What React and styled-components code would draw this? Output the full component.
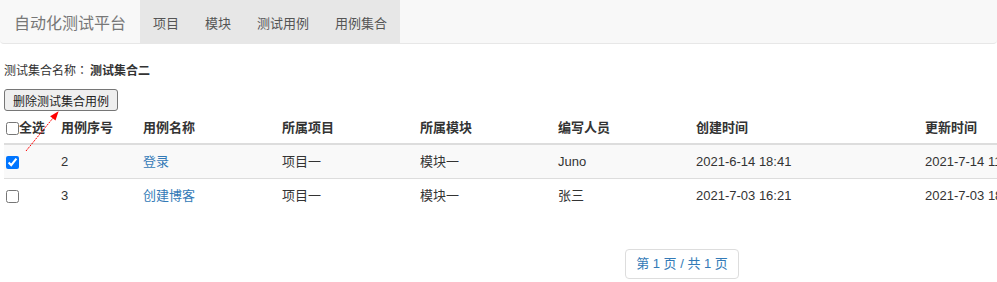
import React from "react";
import styled, { createGlobalStyle } from "styled-components";

const GlobalStyle = createGlobalStyle`
html, body {
  margin: 0;
  padding: 0;
  overflow: hidden;
  background: #fff;
}
body {
  font-family: "Liberation Sans", "Noto Sans CJK SC", sans-serif;
  font-size: 13px;
  color: #333;
}
`;

const Navbar = styled.nav`
  display: flex;
  height: 43px;
  background: #f8f8f8;
  border-bottom: 1px solid #e7e7e7;
  border-radius: 0 0 4px 4px;`;

const Brand = styled.a`
  display: flex;
  align-items: center;
  padding: 1px 14px 0 14px;
  font-size: 16px;
  color: #777;
  text-decoration: none;`;

const NavList = styled.ul`
  display: flex;
  margin: 0;
  padding: 0;
  list-style: none;
  background: #e7e7e7;`;

const NavItem = styled.li`
  display: flex;
  align-items: center;
  padding: 1px 13px 0;
  font-size: 13px;
  color: #555;
  cursor: pointer;`;

const Content = styled.div`
  position: relative;
  padding: 17px 4px 0;`;

const SetTitle = styled.p`
  margin: 0 0 9px;
  font-size: 12px;
  line-height: 18px;

  b {
    font-weight: bold;
    margin-left: 2px;
  }`;

const Colon = styled.span`
  font-family: "Noto Sans CJK TC", sans-serif;`;

const DeleteButton = styled.button`
  display: block;
  height: 22px;
  padding: 0 8px;
  font-family: inherit;
  font-size: 12px;
  color: #222;
  background: #efefef;
  border: 1px solid #767676;
  border-radius: 3px;
  cursor: pointer;`;

const Table = styled.table`
  width: 1356px;
  border-collapse: collapse;
  border-spacing: 0;
  table-layout: fixed;`;

const HeadCell = styled.th`
  box-sizing: border-box;
  width: ${(p) => (p.$w ? `${p.$w}px` : "auto")};
  padding: 8px 2px 6px;
  line-height: 18px;
  text-align: left;
  font-weight: bold;
  border-bottom: 2px solid #ddd;
  white-space: nowrap;`;

const Row = styled.tr`
  background: ${(p) => (p.$striped ? "#f9f9f9" : "#fff")};`;

const Cell = styled.td`
  padding: 8px 2px 7px;
  line-height: 18px;
  border-top: 1px solid #ddd;
  white-space: nowrap;`;

const CheckLabel = styled.label`
  display: flex;
  align-items: center;`;

const Check = styled.input`
  width: 13px;
  height: 13px;
  margin: 0;
  vertical-align: middle;`;

const CaseLink = styled.a`
  color: #337ab7;
  text-decoration: none;`;

const PagerWrap = styled.div`
  width: 1356px;
  margin-top: 37px;
  text-align: center;`;

const Pager = styled.span`
  display: inline-block;
  padding: 5px 10px;
  line-height: 18px;
  color: #337ab7;
  border: 1px solid #ddd;
  border-radius: 4px;`;

const Annotation = styled.svg`
  position: absolute;
  left: 0;
  top: -44px;
  pointer-events: none;`;

const columns = [
  { key: "sel", w: 55 },
  { key: "id", label: "用例序号", w: 82 },
  { key: "name", label: "用例名称", w: 139 },
  { key: "project", label: "所属项目", w: 138 },
  { key: "module", label: "所属模块", w: 138 },
  { key: "author", label: "编写人员", w: 138 },
  { key: "created", label: "创建时间", w: 229 },
  { key: "updated", label: "更新时间" },
];

const cases = [
  {
    id: 2,
    name: "登录",
    project: "项目一",
    module: "模块一",
    author: "Juno",
    created: "2021-6-14 18:41",
    updated: "2021-7-14 11:02",
    checked: true,
  },
  {
    id: 3,
    name: "创建博客",
    project: "项目一",
    module: "模块一",
    author: "张三",
    created: "2021-7-03 16:21",
    updated: "2021-7-03 18:30",
    checked: false,
  },
];

export default function App() {
  return (
    <>
      <GlobalStyle />
      <Navbar>
        <Brand href="#">自动化测试平台</Brand>
        <NavList>
          <NavItem>项目</NavItem>
          <NavItem>模块</NavItem>
          <NavItem>测试用例</NavItem>
          <NavItem>用例集合</NavItem>
        </NavList>
      </Navbar>
      <Content>
        <SetTitle>
          测试集合名称<Colon>：</Colon>
          <b>测试集合二</b>
        </SetTitle>
        <DeleteButton>删除测试集合用例</DeleteButton>
        <Table>
          <thead>
            <tr>
              {columns.map((c) => (
                <HeadCell key={c.key} $w={c.w}>
                  {c.key === "sel" ? (
                    <CheckLabel>
                      <Check type="checkbox" />
                      全选
                    </CheckLabel>
                  ) : (
                    c.label
                  )}
                </HeadCell>
              ))}
            </tr>
          </thead>
          <tbody>
            {cases.map((c, i) => (
              <Row key={c.id} $striped={i % 2 === 0}>
                <Cell>
                  <Check type="checkbox" defaultChecked={c.checked} />
                </Cell>
                <Cell>{c.id}</Cell>
                <Cell>
                  <CaseLink href="#">{c.name}</CaseLink>
                </Cell>
                <Cell>{c.project}</Cell>
                <Cell>{c.module}</Cell>
                <Cell>{c.author}</Cell>
                <Cell>{c.created}</Cell>
                <Cell>{c.updated}</Cell>
              </Row>
            ))}
          </tbody>
        </Table>
        <PagerWrap>
          <Pager>第 1 页 / 共 1 页</Pager>
        </PagerWrap>
        {/* red pointer drawn onto the screenshot, aimed at the delete button */}
        <Annotation width="80" height="200" viewBox="0 0 80 200">
          <line
            x1="26"
            y1="151"
            x2="53"
            y2="118"
            stroke="#ff0000"
            strokeWidth="1"
            strokeDasharray="2 1"
          />
          <polygon points="58.6,111.2 50.1,116.2 55.5,120.6" fill="#ff0000" />
        </Annotation>
      </Content>
    </>
  );
}
